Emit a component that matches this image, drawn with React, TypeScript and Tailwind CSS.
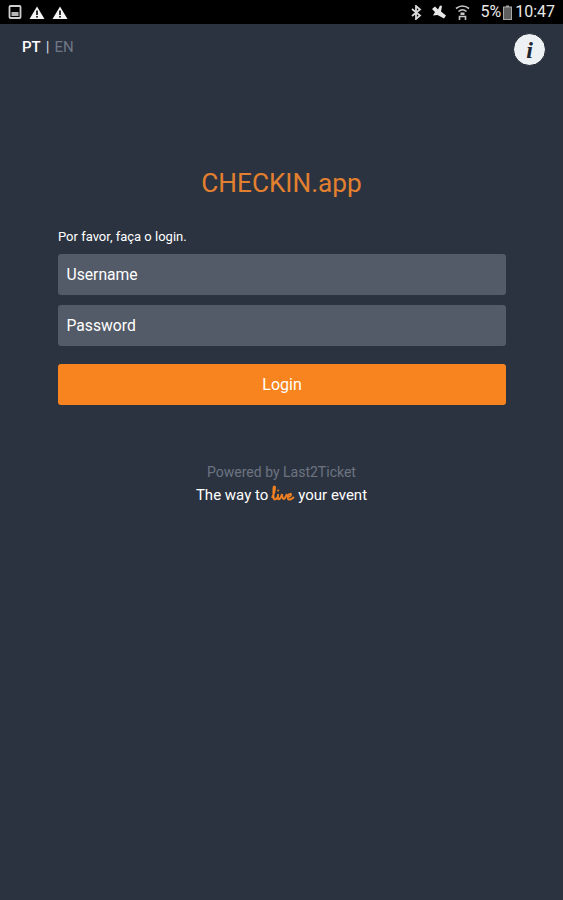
export default function App() {
  return (
    <div className="flex h-[900px] w-[563px] flex-col overflow-hidden bg-[#2b3340] font-['Roboto',sans-serif]">
      <div className="flex h-6 items-center justify-between bg-black pl-2 pr-2 text-white">
        <div className="flex items-center gap-[7px]">
          <svg width="14" height="14" viewBox="0 0 14 14">
            <rect x="1.5" y="1" width="11" height="12" rx="1" fill="none" stroke="#cfcfcf" strokeWidth="1.8" />
            <rect x="3.5" y="7" width="7" height="4" fill="#b5b5b5" />
          </svg>
          <svg width="16" height="13" viewBox="0 0 16 13">
            <path d="M8 0.5L15.5 13H0.5Z" fill="#f5f5f5" />
            <rect x="7.2" y="4.5" width="1.6" height="4.5" fill="#000" />
            <rect x="7.2" y="10" width="1.6" height="1.6" fill="#000" />
          </svg>
          <svg width="16" height="13" viewBox="0 0 16 13">
            <path d="M8 0.5L15.5 13H0.5Z" fill="#f5f5f5" />
            <rect x="7.2" y="4.5" width="1.6" height="4.5" fill="#000" />
            <rect x="7.2" y="10" width="1.6" height="1.6" fill="#000" />
          </svg>
        </div>
        <div className="flex items-center text-[#e8e8e8]">
          <svg width="12" height="15" viewBox="0 0 12 15" fill="none" stroke="#d8d8d8" strokeWidth="1.8">
            <path d="M2 4L10 10.5L6 14V1L10 4.5L2 11" />
          </svg>
          <svg className="ml-[9px]" width="16" height="14" viewBox="0 0 16 14" fill="#e8e8e8">
            <path d="M1 4L4 1.5L7 4.5L9 0.5L11 1L10 6.5L15 10.5L13 13.5L6.5 10L2 10.5L4 7Z" />
          </svg>
          <svg className="ml-[8px]" width="15" height="17" viewBox="0 0 15 17" fill="none" stroke="#c8c8c8" strokeWidth="1.6">
            <path d="M1 4.5Q7.5 -0.5 14 4.5" />
            <path d="M3.5 7.5Q7.5 4 11.5 7.5" />
            <rect x="5.5" y="8.5" width="4" height="2.5" fill="#c8c8c8" stroke="none" />
            <path d="M4.5 16V12.5H10.5V16" />
          </svg>
          <span className="ml-[10px] text-[16px] leading-none">5%</span>
          <svg className="ml-[2px]" width="9" height="15" viewBox="0 0 9 15">
            <rect x="0.5" y="2" width="8" height="12.5" fill="#5f5f5f" stroke="#a8a8a8" />
            <rect x="3" y="0.5" width="3" height="1.5" fill="#a8a8a8" />
          </svg>
          <span className="ml-[3px] text-[16px] leading-none">10:47</span>
        </div>
      </div>

      <div className="flex items-start justify-between pl-[22px] pr-[17px] pt-[9px]">
        <div className="flex items-center pt-[6px] text-[15px] leading-[16px]">
          <span className="font-medium text-white">PT</span>
          <span className="ml-[5px] font-medium text-[#c5ccd6]">|</span>
          <span className="ml-[5px] text-[#6f7784]">EN</span>
        </div>
        <div className="flex size-[33px] items-center justify-center rounded-full border border-[#1d232d] bg-[#eef1f4] font-['Liberation_Serif',serif] text-[24px] font-bold italic leading-none text-[#20262f]">
          i
        </div>
      </div>

      <div className="mt-[102px] text-center text-[26.2px] leading-[30px] text-[#e3802f]">CHECKIN.app</div>

      <div className="mt-[32px] flex flex-col pl-[58px] pr-[57px]">
        <div className="text-[13px] leading-[14px] text-white">Por favor, faça o login.</div>
        <div className="mt-[10px] flex h-[41px] items-center rounded-[3px] bg-[#545b68] px-[8.5px] text-[15.7px] text-white">
          Username
        </div>
        <div className="mt-[10px] flex h-[41px] items-center rounded-[3px] bg-[#545b68] px-[8.5px] text-[15.7px] text-white">
          Password
        </div>
        <div className="mt-[18px] flex h-[41px] items-center justify-center rounded-[3px] bg-[#f7841e] text-[16px] text-white">
          Login
        </div>
      </div>

      <div className="mt-[59px] text-center text-[14px] leading-[16px] text-[#6d7480]">Powered by Last2Ticket</div>
      <div className="mt-[5px] flex items-center justify-center text-[15px] leading-[18px] text-white">
        <span>The way to</span>
        <svg className="mx-[3px] mb-[1px]" width="24" height="18" viewBox="0 0 24 18" fill="none" stroke="#f08020" strokeWidth="1.9" role="img" aria-label="live">
          <path d="M1 13C3 9 4 5 4 2.5C4 1 2.5 1 2.5 3C2.5 7 2 11 3 14C4 15 5.5 14 6.5 12" />
          <path d="M7 9V14C8 14.5 9 14 10 12L11 9C11 12 12 14.5 13 14C14 13.5 15 11 16 9" />
          <path d="M16 12C18 12 20 11 20 9.5C20 8.5 18 8.5 17 10.5C16 13 17 15 19 14.5C21 14 22 13 23 12" />
          <circle cx="7.2" cy="5.5" r="1" fill="#f08020" stroke="none" />
        </svg>
        <span>your event</span>
      </div>
    </div>
  );
}
